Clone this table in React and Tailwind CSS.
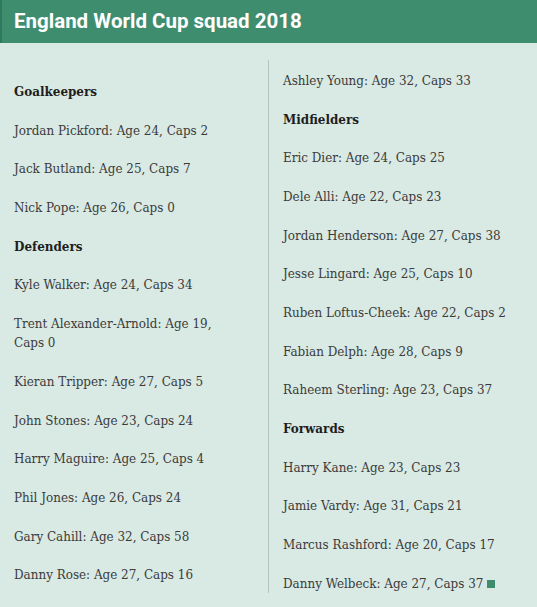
const left = [
  { h: "Goalkeepers" },
  "Jordan Pickford: Age 24, Caps 2",
  "Jack Butland: Age 25, Caps 7",
  "Nick Pope: Age 26, Caps 0",
  { h: "Defenders" },
  "Kyle Walker: Age 24, Caps 34",
  "Trent Alexander-Arnold: Age 19, Caps 0",
  "Kieran Tripper: Age 27, Caps 5",
  "John Stones: Age 23, Caps 24",
  "Harry Maguire: Age 25, Caps 4",
  "Phil Jones: Age 26, Caps 24",
  "Gary Cahill: Age 32, Caps 58",
  "Danny Rose: Age 27, Caps 16",
];

const right = [
  "Ashley Young: Age 32, Caps 33",
  { h: "Midfielders" },
  "Eric Dier: Age 24, Caps 25",
  "Dele Alli: Age 22, Caps 23",
  "Jordan Henderson: Age 27, Caps 38",
  "Jesse Lingard: Age 25, Caps 10",
  "Ruben Loftus-Cheek: Age 22, Caps 2",
  "Fabian Delph: Age 28, Caps 9",
  "Raheem Sterling: Age 23, Caps 37",
  { h: "Forwards" },
  "Harry Kane: Age 23, Caps 23",
  "Jamie Vardy: Age 31, Caps 21",
  "Marcus Rashford: Age 20, Caps 17",
  "Danny Welbeck: Age 27, Caps 37",
];

function Row({ item, last, mark }) {
  if (typeof item === "object") {
    return (
      <p className="font-bold text-[#1e1e1e] leading-[19.33px] mb-[19.33px]">{item.h}</p>
    );
  }
  return (
    <p className={"text-[#3b3b3b] leading-[19.33px] " + (last ? "mb-0" : "mb-[19.33px]")}>
      {item}
      {mark && <span className="inline-block w-[8px] h-[8px] bg-[#3d8c6e] ml-[4px]" />}
    </p>
  );
}

export default function App() {
  return (
    <div className="w-[537px] h-[607px] bg-[#d9e9e3] font-['DejaVu_Serif_Condensed','DejaVu_Serif',serif] text-[13.3px]">
      <div className="h-[43px] bg-[#3e8d6e] border-l-2 border-[#2f7a5c] flex items-center pl-[12px]">
        <h1 className="font-['Roboto',sans-serif] font-bold text-[20.5px] text-white leading-none">
          England World Cup squad 2018
        </h1>
      </div>
      <div className="flex px-[14px] pt-[17px]">
        <div className="w-[240px] pr-[14px] pt-[22px]">
          {left.map((it, i) => (
            <Row key={i} item={it} last={i === left.length - 1} />
          ))}
        </div>
        <div className="ml-[14px] border-l border-[#b5c3be] pl-[14px] pt-[11px] flex-1">
          {right.map((it, i) => (
            <Row key={i} item={it} last={i === right.length - 1} mark={i === right.length - 1} />
          ))}
        </div>
      </div>
    </div>
  );
}
